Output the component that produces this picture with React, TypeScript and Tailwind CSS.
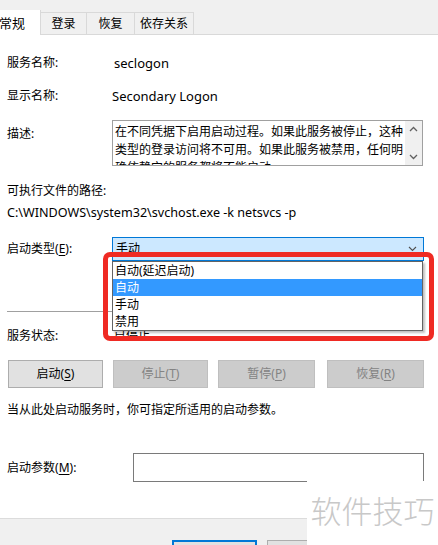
import React from "react";

const font = { fontFamily: '"Noto Sans", "Noto Sans CJK SC", sans-serif' };

function Key({ k }: { k: string }) {
  return (
    <>
      (<span className="underline underline-offset-2">{k}</span>)
    </>
  );
}

function Tab({ label, w }: { label: string; w: string }) {
  return (
    <div className={`${w} h-[22px] border border-l-0 border-b-0 border-[#d9d9d9] flex items-center justify-center`}>
      {label}
    </div>
  );
}

export default function App() {
  return (
    <div className="relative w-[438px] h-[545px] overflow-hidden bg-white text-[12px] text-black leading-[18px]" style={font}>
      {/* Tabs */}
      <div className="h-[35px] bg-[#f0f0f0] flex items-end border-b border-[#d9d9d9]">
        <div className="w-[42px] h-[25px] -mb-px bg-white border-r border-[#d9d9d9] flex items-center text-[13px] -ml-[1px]">
          常规
        </div>
        <Tab label="登录" w="w-[46px]" />
        <Tab label="恢复" w="w-[48px]" />
        <Tab label="依存关系" w="w-[59px]" />
      </div>

      <div className="px-[7px]">
        <div className="mt-[19px] flex">
          <div className="w-[107px]">服务名称:</div>
          <div className="text-[13px]">seclogon</div>
        </div>
        <div className="mt-[15px] flex">
          <div className="w-[105px]">显示名称:</div>
          <div className="text-[13px]">Secondary Logon</div>
        </div>

        <div className="mt-[15px] flex">
          <div className="w-[105px] pt-[5px]">描述:</div>
          <div className="w-[311px] h-[46px] border border-[#a0a0a0] flex overflow-hidden">
            <div className="flex-1 pl-[2px] pt-[2px] whitespace-nowrap overflow-hidden">
              在不同凭据下启用启动过程。如果此服务被停止，这种
              <br />
              类型的登录访问将不可用。如果此服务被禁用，任何明
              <br />
              确依赖它的服务都将不能启动。
            </div>
            <div className="w-[17px] bg-[#f0f0f0] flex flex-col items-center justify-between py-[5px]">
              <svg width="9" height="6" viewBox="0 0 9 6"><path d="M1 5 L4.5 1.5 L8 5" fill="none" stroke="#606060" strokeWidth="1.3" /></svg>
              <svg width="9" height="6" viewBox="0 0 9 6"><path d="M1 1 L4.5 4.5 L8 1" fill="none" stroke="#606060" strokeWidth="1.3" /></svg>
            </div>
          </div>
        </div>

        <div className="mt-[16px]">可执行文件的路径:</div>
        <div className="mt-[4px] text-[12.6px]">C:\WINDOWS\system32\svchost.exe -k netsvcs -p</div>

        <div className="mt-[15px] flex items-center">
          <div className="w-[105px]">
            启动类型<Key k="E" />:
          </div>
          <div className="w-[312px] h-[24px] bg-[#cce8ff] border border-[#0078d7] flex items-center justify-between pl-[3px] pr-[6px]">
            <span>手动</span>
            <svg width="9" height="6" viewBox="0 0 9 6"><path d="M1 1 L4.5 4.5 L8 1" fill="none" stroke="#505050" strokeWidth="1.1" /></svg>
          </div>
        </div>

        <div className="mt-[50px] h-px bg-[#a0a0a0] w-[416px]" />

        <div className="mt-[15px] flex">
          <div className="w-[107px]">服务状态:</div>
          <div>已停止</div>
        </div>

        <div className="mt-[15px] flex gap-[10px] ml-[1px]">
          <button className="w-[95px] h-[28px] bg-[#e1e1e1] border border-[#adadad]">
            启动<Key k="S" />
          </button>
          <button className="w-[95px] h-[28px] bg-[#cccccc] border border-[#bfbfbf] text-[#838383]">
            停止<Key k="T" />
          </button>
          <button className="w-[97px] h-[28px] bg-[#cccccc] border border-[#bfbfbf] text-[#838383]">
            暂停<Key k="P" />
          </button>
          <button className="w-[97px] h-[28px] ml-[2px] bg-[#cccccc] border border-[#bfbfbf] text-[#838383]">
            恢复<Key k="R" />
          </button>
        </div>

        <div className="mt-[13px]">当从此处启动服务时，你可指定所适用的启动参数。</div>

        <div className="mt-[34px] flex items-center">
          <div className="w-[126px]">
            启动参数<Key k="M" />:
          </div>
          <div className="w-[291px] h-[29px] border border-[#7a7a7a]" />
        </div>
      </div>

      {/* Footer */}
      <div className="mt-[36px] h-[40px] bg-[#f0f0f0] border-t border-[#dcdcdc] flex gap-[10px] pl-[172px] pt-[21px]">
        <button className="w-[85px] h-[26px] bg-[#e1e1e1] border-2 border-[#0078d7] leading-[22px]">确定</button>
        <button className="w-[85px] h-[26px] bg-[#e1e1e1] border border-[#adadad] leading-[22px]">取消</button>
      </div>

      {/* Dropdown list */}
      <div className="absolute left-[112px] top-[261px] w-[311px] h-[70px] bg-white border border-[#646464] shadow-[2px_2px_2px_rgba(0,0,0,0.25)] flex flex-col leading-[17px]">
        <div className="pl-[2px] h-[17px]">自动(延迟启动)</div>
        <div className="pl-[2px] h-[17px] bg-[#3399ff] text-white">自动</div>
        <div className="pl-[2px] h-[17px]">手动</div>
        <div className="pl-[2px] h-[17px]">禁用</div>
      </div>

      {/* Red annotation */}
      <div className="absolute left-[103px] top-[252px] w-[331px] h-[89px] border-[5px] border-[#ef2a23] rounded-[7px]" />

      {/* Watermark */}
      <div className="absolute left-[307px] top-[481px] w-[131px] h-[64px] bg-white flex items-center justify-center pb-[8px]">
        <span className="text-[31px] font-light text-[#c8c8c8] leading-none" style={{ fontFamily: '"Noto Sans CJK SC", sans-serif' }}>
          软件技巧
        </span>
      </div>
    </div>
  );
}
